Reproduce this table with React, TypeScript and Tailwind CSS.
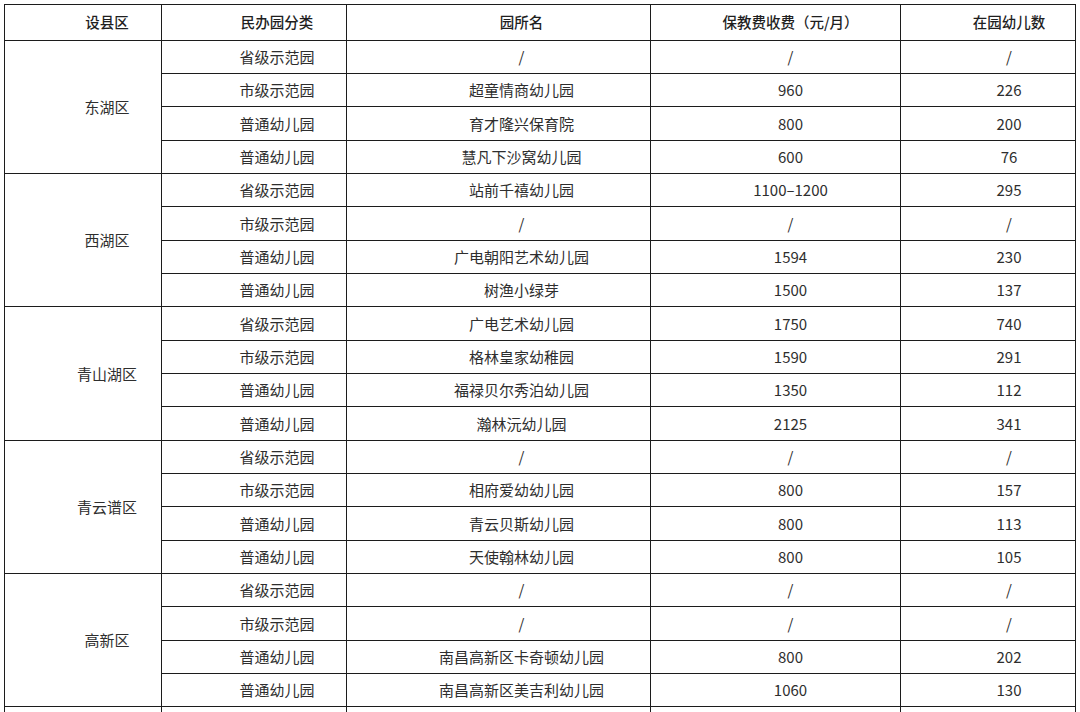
const font = { fontFamily: '"Noto Sans CJK SC", "Noto Sans", sans-serif' };

type Row = [string, string, string, string];

const groups: { area: string; rows: Row[] }[] = [
  {
    area: "东湖区",
    rows: [
      ["省级示范园", "/", "/", "/"],
      ["市级示范园", "超童情商幼儿园", "960", "226"],
      ["普通幼儿园", "育才隆兴保育院", "800", "200"],
      ["普通幼儿园", "慧凡下沙窝幼儿园", "600", "76"],
    ],
  },
  {
    area: "西湖区",
    rows: [
      ["省级示范园", "站前千禧幼儿园", "1100–1200", "295"],
      ["市级示范园", "/", "/", "/"],
      ["普通幼儿园", "广电朝阳艺术幼儿园", "1594", "230"],
      ["普通幼儿园", "树渔小绿芽", "1500", "137"],
    ],
  },
  {
    area: "青山湖区",
    rows: [
      ["省级示范园", "广电艺术幼儿园", "1750", "740"],
      ["市级示范园", "格林皇家幼稚园", "1590", "291"],
      ["普通幼儿园", "福禄贝尔秀泊幼儿园", "1350", "112"],
      ["普通幼儿园", "瀚林沅幼儿园", "2125", "341"],
    ],
  },
  {
    area: "青云谱区",
    rows: [
      ["省级示范园", "/", "/", "/"],
      ["市级示范园", "相府爱幼幼儿园", "800", "157"],
      ["普通幼儿园", "青云贝斯幼儿园", "800", "113"],
      ["普通幼儿园", "天使翰林幼儿园", "800", "105"],
    ],
  },
  {
    area: "高新区",
    rows: [
      ["省级示范园", "/", "/", "/"],
      ["市级示范园", "/", "/", "/"],
      ["普通幼儿园", "南昌高新区卡奇顿幼儿园", "800", "202"],
      ["普通幼儿园", "南昌高新区美吉利幼儿园", "1060", "130"],
    ],
  },
];

const cell = "border border-[#1c1c1c] text-center align-middle p-0 pt-[1px] h-[33.35px]";
const pads = ["pl-[48px]", "pl-[46px]", "pl-[46px]", "pl-[30px]", "pl-[42px]"];

export default function App() {
  return (
    <div className="bg-white min-h-screen pt-1 pl-1" style={font}>
      <table className="w-[1071px] table-fixed border-collapse text-[15px] text-[#2e2e2e]">
        <colgroup>
          <col className="w-[157px]" />
          <col className="w-[185px]" />
          <col className="w-[304px]" />
          <col className="w-[250px]" />
          <col className="w-[175px]" />
        </colgroup>
        <thead>
          <tr className="h-[35.5px] text-[14.5px] text-[#1f1f1f]">
            {["设县区", "民办园分类", "园所名", "保教费收费（元/月）", "在园幼儿数"].map((h, i) => (
              <th key={h} className={`border border-[#1c1c1c] text-center align-middle p-0 font-medium ${pads[i]}`}>
                {h}
              </th>
            ))}
          </tr>
        </thead>
        <tbody>
          {groups.map((g) =>
            g.rows.map((r, j) => (
              <tr key={g.area + j}>
                {j === 0 && (
                  <td rowSpan={4} className={`${cell} ${pads[0]}`}>
                    {g.area}
                  </td>
                )}
                {r.map((v, k) => (
                  <td key={k} className={`${cell} ${pads[k + 1]}`}>
                    {v}
                  </td>
                ))}
              </tr>
            ))
          )}
          <tr>
            <td className={cell}></td>
            <td className={cell}></td>
            <td className={cell}></td>
            <td className={cell}></td>
            <td className={cell}></td>
          </tr>
        </tbody>
      </table>
    </div>
  );
}
